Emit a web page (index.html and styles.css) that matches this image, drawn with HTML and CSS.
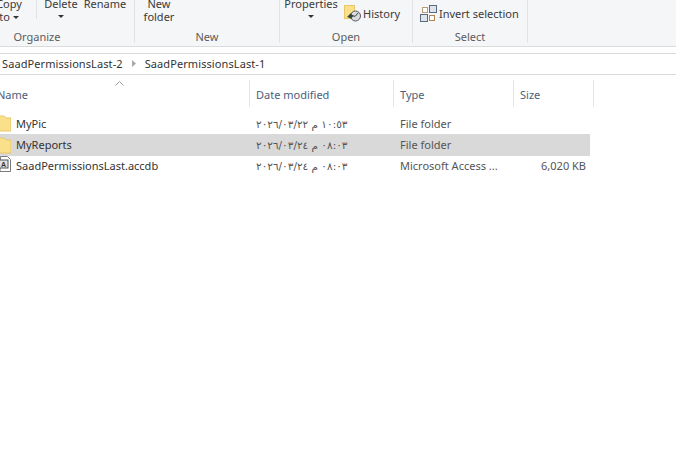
FILE: index.html
```html
<!DOCTYPE html>
<html lang="en">
<head>
<meta charset="utf-8">
<title>SaadPermissionsLast-1</title>
<link rel="stylesheet" href="styles.css">
</head>
<body>
<section class="ribbon">
  <div class="group organize">
    <div class="tools">
      <div class="tool copy"><span>Copy</span><span>to <i class="caret"></i></span></div>
      <div class="vsep"></div>
      <div class="tool delete"><span>Delete</span><i class="caret lone"></i></div>
      <div class="tool rename"><span>Rename</span><span>&nbsp;</span></div>
    </div>
    <div class="label">Organize</div>
  </div>
  <div class="group new">
    <div class="tools">
      <div class="tool newfolder"><span>New</span><span>folder</span></div>
    </div>
    <div class="label">New</div>
  </div>
  <div class="group open">
    <div class="tools">
      <div class="tool props"><span>Properties</span><i class="caret lone"></i></div>
      <div class="inline history">
        <svg width="19" height="18" viewBox="0 0 19 18">
          <rect x="1.500" y="1.500" width="10" height="13" fill="#fbe08c" stroke="#e6c867"/>
          <circle cx="12.500" cy="12" r="5" fill="#d8dade" stroke="#55585c"/>
          <path d="M12.500 12l2.500-3M12.500 12l-2 .5" stroke="#3a3d40" fill="none"/>
          <path d="M4 13l4-4 1 2 2 0-3 4-1-1z" fill="#34483a"/>
        </svg>
        <span>History</span>
      </div>
    </div>
    <div class="label">Open</div>
  </div>
  <div class="group select">
    <div class="tools">
      <div class="inline invert">
        <svg width="17" height="17" viewBox="0 0 17 17">
          <rect x="2.500" y="2.500" width="5" height="5" fill="#fff" stroke="#b89a78"/>
          <rect x="9.500" y=".5" width="7" height="7" fill="#dfe3ea" stroke="#5a6a80"/>
          <rect x=".5" y="9.500" width="7" height="7" fill="#dfe3ea" stroke="#5a6a80"/>
          <rect x="9.500" y="10.500" width="5" height="5" fill="#fff" stroke="#b0854f"/>
        </svg>
        <span>Invert selection</span>
      </div>
    </div>
    <div class="label">Select</div>
  </div>
</section>
<div class="gap"></div>
<nav class="address">
  <span>SaadPermissionsLast-2</span>
  <svg class="crumb" width="6" height="7" viewBox="0 0 6 7"><path d="M1 0l4 3.500-4 3.500z" fill="#a9a9a9"/></svg>
  <span>SaadPermissionsLast-1</span>
</nav>
<section class="list">
  <div class="row head">
    <div class="col name"><span class="clip-name">Name</span>
      <svg class="sort" width="9" height="5" viewBox="0 0 9 5"><path d="M.5 4.500l4-4 4 4" fill="none" stroke="#9a9ea6"/></svg>
    </div>
    <div class="col date">Date modified</div>
    <div class="col type">Type</div>
    <div class="col size">Size</div>
  </div>
  <div class="row item first">
    <div class="col name">
      <svg class="file" width="11" height="17" viewBox="0 0 11 17"><path d="M-6 1h10l2 2h5v13h-17z" fill="#fbe08c" stroke="#e6c867"/></svg>
      <span class="fname">MyPic</span></div>
    <div class="col date"><span class="ar">٢٠٢٦/٠٣/٢٢ م ١٠:٥٣</span></div>
    <div class="col type">File folder</div>
    <div class="col size"></div>
  </div>
  <div class="row item selected">
    <div class="col name">
      <svg class="file" width="11" height="17" viewBox="0 0 11 17"><path d="M-6 1h10l2 2h5v13h-17z" fill="#fbe08c" stroke="#e6c867"/></svg>
      <span class="fname">MyReports</span></div>
    <div class="col date"><span class="ar">٢٠٢٦/٠٣/٢٤ م ٠٨:٠٣</span></div>
    <div class="col type">File folder</div>
    <div class="col size"></div>
  </div>
  <div class="row item last">
    <div class="col name">
      <svg class="file" width="11" height="17" viewBox="0 0 11 17"><path d="M.5.500h7l3 3v12h-10.500z" fill="#fff" stroke="#7a7a7a"/><rect x="-1" y="4" width="9" height="8" fill="#dde1e6" stroke="#555"/><text class="doc-a" x="1" y="11">A</text></svg>
      <span class="fname">SaadPermissionsLast.accdb</span></div>
    <div class="col date"><span class="ar">٢٠٢٦/٠٣/٢٤ م ٠٨:٠٣</span></div>
    <div class="col type">Microsoft Access ...</div>
    <div class="col size num">6,020 KB</div>
  </div>
</section>
</body>
</html>
```

FILE: styles.css
```css
* { box-sizing: border-box; }
html, body { margin: 0; height: 100%; overflow: hidden; background: #fff; }
body {
  font-family: "Noto Sans", "Open Sans", sans-serif;
  font-size: 11px;
  color: #3a3a3a;
}

/* Ribbon */
.ribbon {
  display: flex;
  height: 47px;
  background: #f5f6f7;
  border-bottom: 1px solid #dadbdc;
  overflow: hidden;
}
.group {
  display: flex;
  flex-direction: column;
  height: 43px;
  flex: none;
  border-right: 1px solid #e1e3e6;
}
.organize { width: 135px; }
.new { width: 145px; }
.open { width: 133px; }
.select { width: 115px; }
.tools {
  height: 30px;
  display: flex;
  align-items: flex-end;
}
.label {
  height: 13px;
  line-height: 13px;
  text-align: center;
  color: #5c5c5c;
}
.organize .label { padding-right: 60px; }
.tool {
  display: flex;
  flex-direction: column;
  align-items: center;
  line-height: 13px;
  color: #3a3a3a;
  padding-bottom: 7px;
  height: 33px;
  justify-content: flex-end;
}
.tool span { display: block; white-space: nowrap; }
.copy { width: 24px; margin-left: -3px; }
.vsep { width: 1px; height: 19px; background: #e1e3e6; margin: 0 7px 11px 15px; align-self: flex-start; }
.delete { width: 34px; }
.rename { width: 42px; margin-left: 6px; }
.newfolder { width: 40px; margin-left: 4px; }
.props { width: 60px; margin-left: 1px; }
.caret {
  display: inline-block;
  width: 0;
  height: 0;
  border-left: 3px solid transparent;
  border-right: 3px solid transparent;
  border-top: 3px solid #333;
  vertical-align: 2px;
}
.caret.lone { display: block; margin: 5px 0 5px; }
.inline { display: flex; align-items: center; color: #3a3a3a; }
.history { margin-left: 2px; height: 22px; margin-bottom: 6px; gap: 1px; }
.invert { margin-left: 7px; height: 22px; margin-bottom: 6px; gap: 2px; }

.gap { height: 6px; }

/* Address */
.address {
  height: 22px;
  padding-bottom: 2px;
  border-top: 1px solid #d9d9d9;
  border-bottom: 1px solid #d9d9d9;
  display: flex;
  align-items: center;
  gap: 7px;
  padding-left: 2px;
  color: #333;
  letter-spacing: .09px;
  white-space: nowrap;
}
.crumb { margin: 0 1px; flex: none; }

/* List */
.list { padding-top: 5px; }
.row { display: flex; width: 590px; }
.col { flex: none; white-space: nowrap; padding-left: 6px; overflow: hidden; }
.col.name { width: 250px; padding-left: 0; display: flex; align-items: center; position: relative; overflow: visible; }
.col.date { width: 144px; }
.col.type { width: 120px; }
.col.size { width: 76px; }
.head { height: 27px; width: 594px; color: #4c607a; }
.head .col { height: 27px; line-height: 29px; border-right: 1px solid #e5e5e5; }
.head .col.name { display: block; }
.clip-name { margin-left: -3px; }
.head .col.size { width: 80px; }
.sort { position: absolute; left: 115px; top: 1px; }
.item { height: 21px; line-height: 21px; color: #555; }
.item.first { margin-top: 6px; }
.item.selected { background: #d9d9d9; height: 22px; line-height: 22px; }
.item.last { line-height: 19px; }
.item.last .col.name { line-height: 19px; align-items: flex-start; }
.item .name { color: #333; }
.file { flex: none; margin-right: 5px; }
.doc-a { font-size: 7px; font-weight: 700; fill: #333; font-family: "Liberation Sans", sans-serif; }
.ar {
  direction: ltr;
  unicode-bidi: bidi-override;
  font-family: "DejaVu Sans", sans-serif;
  font-size: 10.500px;
}
.num { text-align: right; padding-right: 4px; }
```
